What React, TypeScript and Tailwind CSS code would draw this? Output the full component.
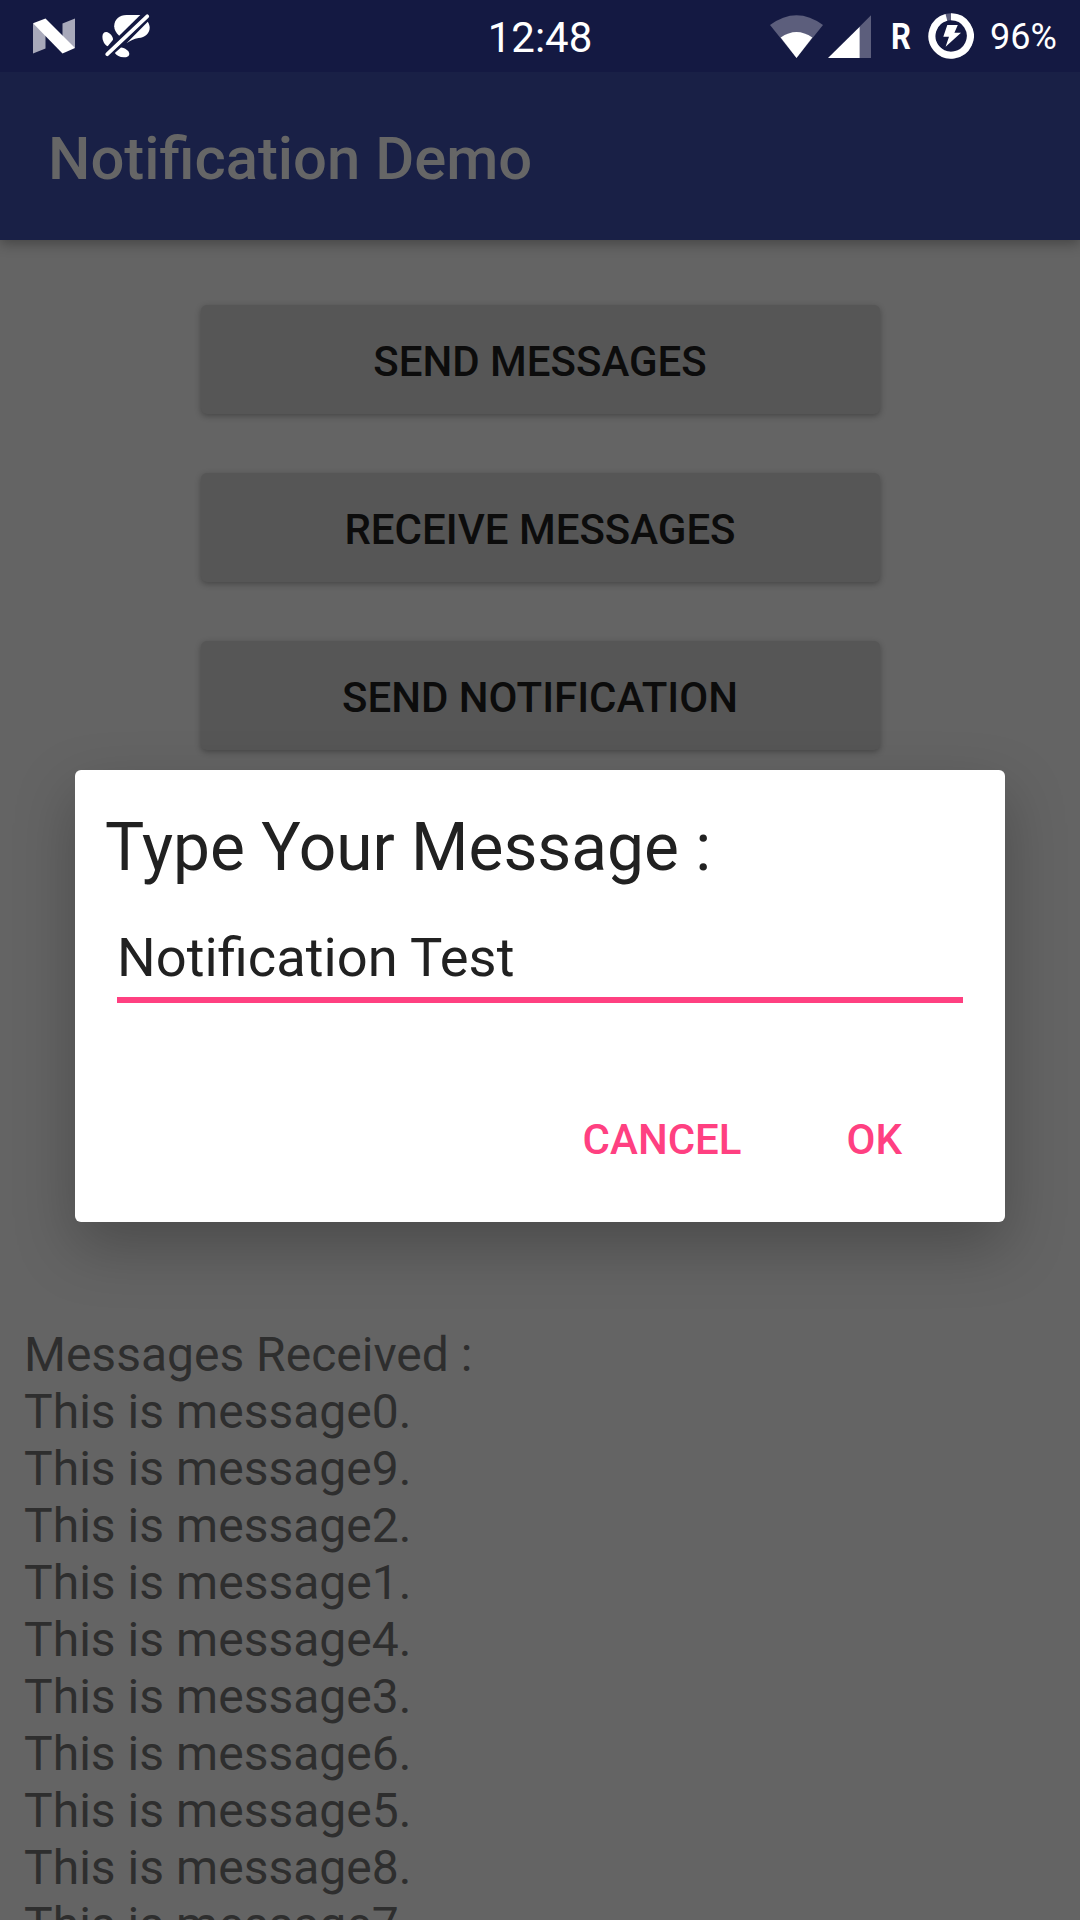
const actions = ["SEND MESSAGES", "RECEIVE MESSAGES", "SEND NOTIFICATION"];
const messages = [0, 9, 2, 1, 4, 3, 6, 5, 8, 7];

function NougatIcon() {
  return (
    <svg className="ml-[33px] h-9 w-[43px]" viewBox="33 18 43 36">
      <path d="M33 23.5L45.5 28V48.5L33 53.5Z" fill="#a8a9ba" />
      <path d="M62.5 23.5L75 18.5V48L62.5 43Z" fill="#a8a9ba" />
      <path d="M33 23.2L45.5 18.5L75 48L62.5 53.5Z" fill="#fff" />
    </svg>
  );
}

function MutedSyncIcon() {
  return (
    <svg className="ml-[26px] h-11 w-12" viewBox="102 14 48 44" fill="#fff">
      <path d="M140.3 15L119.2 35.8C115.8 32.8 114.2 29.5 114.2 26.3C114.2 19.3 119.5 15 126.5 15Z" />
      <path d="M147.8 21.8C149 24 149.7 25.8 149.7 27.5C149.7 33.5 145.2 37.5 138.5 38C134 38.4 130.2 41.2 126.5 43.2Z" />
      <path d="M106.5 32C109.5 32.5 113.3 36.2 113 39.8L107.7 46.3C104.5 44.8 102.4 40.5 102.4 36.7C102.4 33.8 104 31.8 106.5 32Z" />
      <path d="M121 47.6C125.5 48.2 129.4 51.3 129.3 54C129.2 56.5 126.7 57.3 123.8 57.3C119.5 57.2 116.8 55.5 114.8 53Z" />
      <path d="M107.3 54.2L147.2 16.3" stroke="#fff" strokeWidth="3.7" strokeLinecap="round" />
    </svg>
  );
}

function WifiIcon() {
  return (
    <svg className="h-[43px] w-[54px]" viewBox="770 14 54 43">
      <path d="M770 24Q796.5 4.5 823 24L796.5 57Z" fill="#5c5e7c" />
      <path d="M780.7 36.5Q796.5 25.5 812.3 36.5L796.5 57Z" fill="#fff" />
    </svg>
  );
}

function SignalIcon() {
  return (
    <svg className="ml-1 h-[43px] w-[43px]" viewBox="828 14 43 43">
      <path d="M859.5 25.8L871 14.3V57H859.5Z" fill="#5c5e7c" />
      <path d="M828 57L859.7 25.7V57Z" fill="#fff" />
    </svg>
  );
}

function ChargingIcon() {
  return (
    <svg className="ml-[14px] h-[46px] w-[46px]" viewBox="928 13 46 46">
      <circle cx="951" cy="36" r="19.2" fill="none" stroke="#5c5e7c" strokeWidth="7" />
      <path d="M951 16.8A19.2 19.2 0 1 1 946.4 17.4" fill="none" stroke="#fff" strokeWidth="7" />
      <path d="M947.3 25H957.8L954.4 32.7H961L945.6 46.8L949 36.7H943.3Z" fill="#fff" />
    </svg>
  );
}

function StatusBar() {
  return (
    <header className="relative z-10 grid h-[72px] grid-cols-[1fr_auto_1fr] items-center bg-[#141942] text-white">
      <div className="flex items-center">
        <NougatIcon />
        <MutedSyncIcon />
      </div>
      <span className="pt-[3px] text-[42px] leading-[69px]">12:48</span>
      <div className="flex items-center justify-end pr-[25px]">
        <WifiIcon />
        <SignalIcon />
        <span className="ml-5 inline-block w-[23px] origin-left scale-x-[0.84] pt-[1px] text-[37px] leading-[71px] font-bold">R</span>
        <ChargingIcon />
        <span className="ml-4 w-[65px] pt-[3px] text-[36px] leading-[69px]">96%</span>
      </div>
    </header>
  );
}

export default function App() {
  return (
    <div className="relative flex h-[1920px] w-[1080px] flex-col overflow-hidden bg-[#646464] font-[Roboto,sans-serif]">
      <StatusBar />
      <div className="flex h-[168px] shrink-0 items-center bg-[#192046] pt-[5px] pl-12 shadow-[0_4px_12px_rgba(0,0,0,0.3)]">
        <h1 className="text-[59.8px] leading-[70px] font-medium text-[#666666]">Notification Demo</h1>
      </div>

      <div className="flex h-[1086px] shrink-0 flex-col items-center gap-[59px] pt-[65px]">
        {actions.map((label) => (
          <button
            key={label}
            className="h-[109px] w-[679px] shrink-0 rounded-[6px] bg-[#565656] pt-[5px] text-[42px] leading-[50px] font-medium text-[#0c0c0c] shadow-[0_2px_6px_rgba(0,0,0,0.3)]"
          >
            {label}
          </button>
        ))}
      </div>

      <div className="pl-6 text-[48px] leading-[57px] text-[#2e2e2e]">
        <p>Messages Received :</p>
        {messages.map((n) => (
          <p key={n} className="tracking-[0.03px]">{`This is message${n}.`}</p>
        ))}
      </div>

      <section
        role="dialog"
        className="absolute top-[770px] left-[75px] flex h-[452px] w-[930px] flex-col rounded-[6px] bg-white text-[#212121] shadow-[0_24px_60px_rgba(0,0,0,0.25)]"
      >
        <h2 className="pt-[39px] pl-[30px] text-[65.8px] leading-[78px]">Type Your Message :</h2>
        <div className="mt-[40px] mr-[42px] ml-[42px] h-[76px] border-b-[6px] border-[#ff4081] text-[54.3px] leading-[62px]">
          Notification Test
        </div>
        <div className="mt-[112px] flex justify-end gap-[105px] pr-[103px] text-[42px] leading-[50px] font-medium text-[#ff4081]">
          <button>CANCEL</button>
          <button>OK</button>
        </div>
      </section>
    </div>
  );
}
